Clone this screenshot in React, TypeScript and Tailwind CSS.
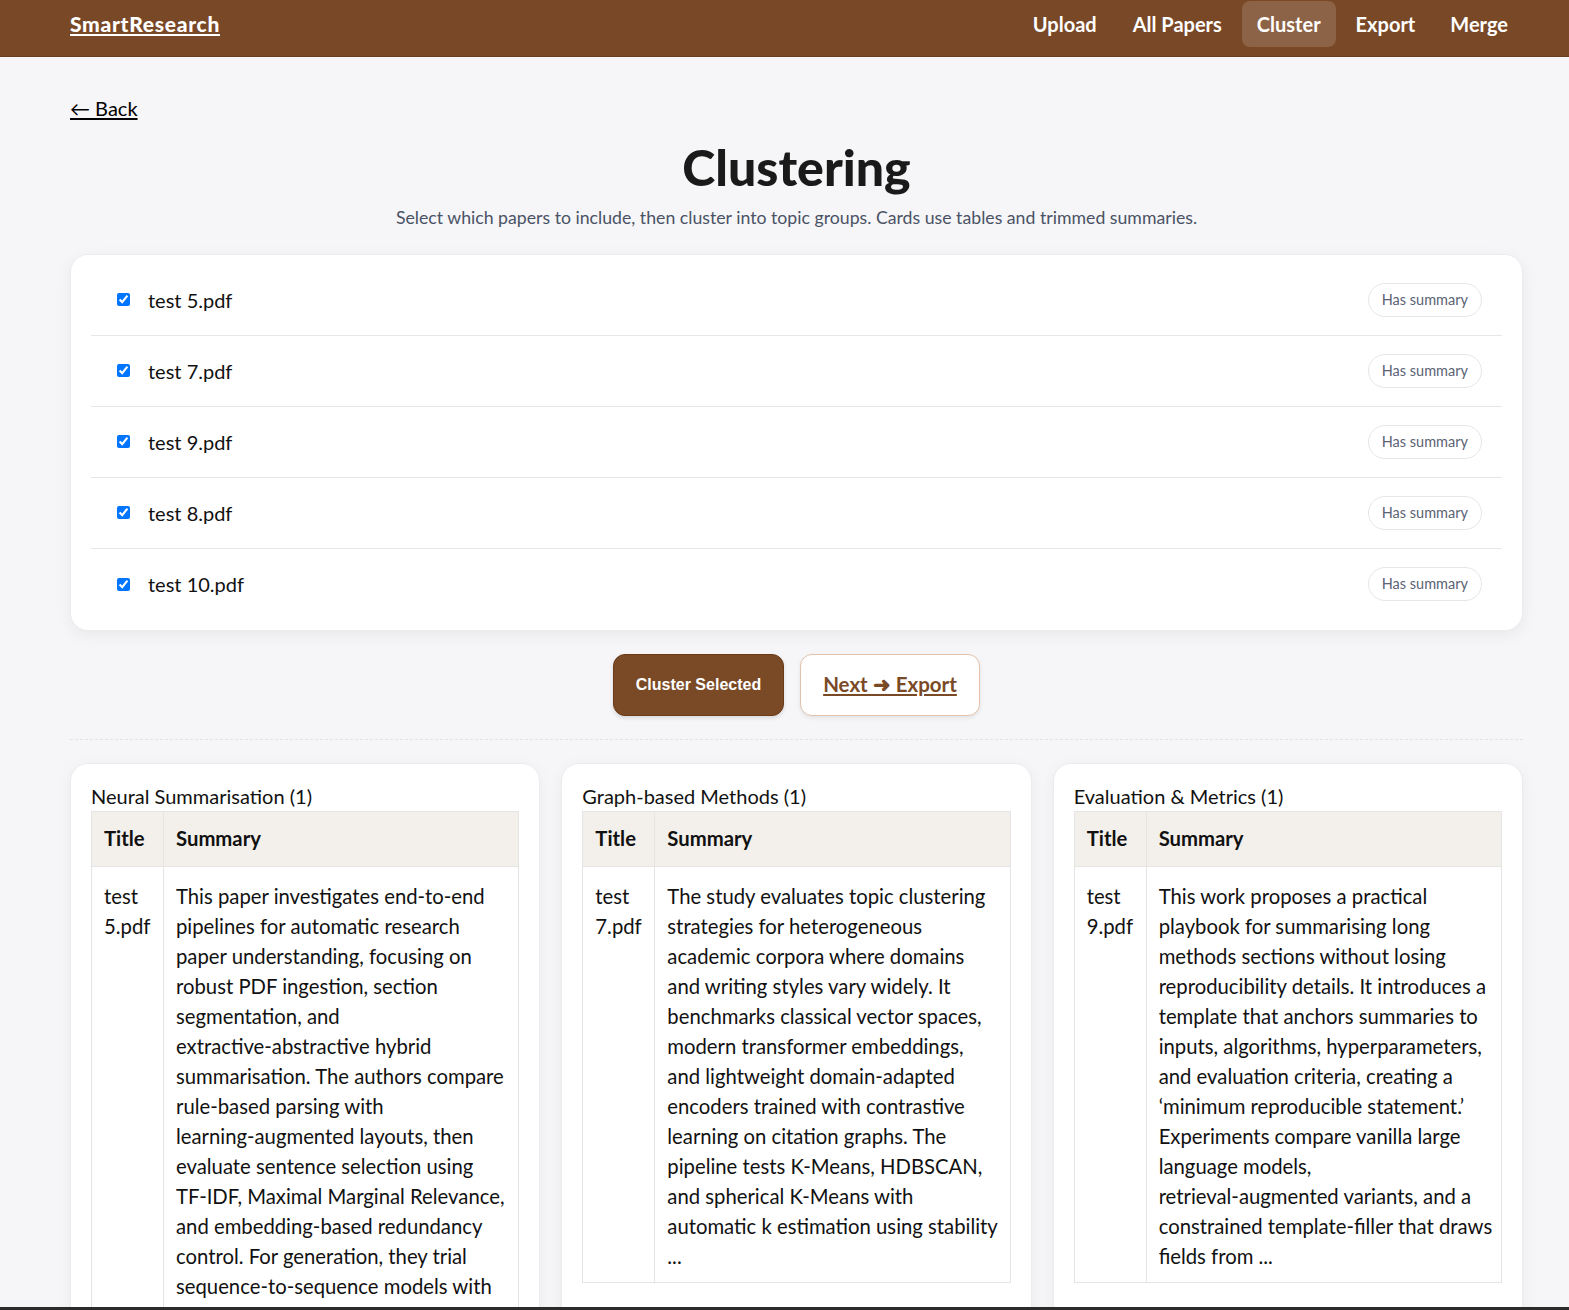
import React from 'react'

const font = 'Lato, "Noto Sans", Arial, sans-serif'

const papers = ['test 5.pdf', 'test 7.pdf', 'test 9.pdf', 'test 8.pdf', 'test 10.pdf']

const clusters = [
  {
    name: 'Neural Summarisation (1)',
    title: 'test 5.pdf',
    lines: [
      'This paper investigates end-to-end',
      'pipelines for automatic research',
      'paper understanding, focusing on',
      'robust PDF ingestion, section',
      'segmentation, and',
      'extractive-abstractive hybrid',
      'summarisation. The authors compare',
      'rule-based parsing with',
      'learning-augmented layouts, then',
      'evaluate sentence selection using',
      'TF-IDF, Maximal Marginal Relevance,',
      'and embedding-based redundancy',
      'control. For generation, they trial',
      'sequence-to-sequence models with',
      'citation-aware prompting and ...',
    ],
  },
  {
    name: 'Graph-based Methods (1)',
    title: 'test 7.pdf',
    lines: [
      'The study evaluates topic clustering',
      'strategies for heterogeneous',
      'academic corpora where domains',
      'and writing styles vary widely. It',
      'benchmarks classical vector spaces,',
      'modern transformer embeddings,',
      'and lightweight domain-adapted',
      'encoders trained with contrastive',
      'learning on citation graphs. The',
      'pipeline tests K-Means, HDBSCAN,',
      'and spherical K-Means with',
      'automatic k estimation using stability',
      '...',
    ],
  },
  {
    name: 'Evaluation & Metrics (1)',
    title: 'test 9.pdf',
    lines: [
      'This work proposes a practical',
      'playbook for summarising long',
      'methods sections without losing',
      'reproducibility details. It introduces a',
      'template that anchors summaries to',
      'inputs, algorithms, hyperparameters,',
      'and evaluation criteria, creating a',
      '\u2018minimum reproducible statement.\u2019',
      'Experiments compare vanilla large',
      'language models,',
      'retrieval-augmented variants, and a',
      'constrained template-filler that draws',
      'fields from ...',
    ],
  },
]

export default function App() {
  return (
    <div className="min-h-screen bg-[#f6f6f8] text-[#111]" style={{ fontFamily: font }}>
      {/* header */}
      <header className="h-[57px] bg-[#794827] border-b border-[#6a3d1f]">
        <div className="ml-[70px] w-[1453px] h-[48px] flex items-center justify-between">
          <a className="text-white text-[21px] font-black tracking-[0.7px] underline underline-offset-2 decoration-2">SmartResearch</a>
          <nav className="flex items-center gap-[4px] h-full text-white text-[20px] font-bold">
            <a className="px-[16px] py-[8px]">Upload</a>
            <a className="px-[16px] py-[8px]">All Papers</a>
            <a className="px-[15px] h-[46px] flex items-center rounded-lg bg-white/15">Cluster</a>
            <a className="px-[16px] py-[8px]">Export</a>
            <a className="px-[15px] py-[8px]">Merge</a>
          </nav>
        </div>
      </header>

      <main className="ml-[70px] w-[1453px] pb-10">
        <div className="pt-[36px]">
          <a className="text-[20px] underline underline-offset-2 text-black">← Back</a>
        </div>

        <h1 className="mt-[12px] text-center text-[50px] leading-[64px] font-black text-[#1a1a1a]">Clustering</h1>
        <p className="mt-[6px] text-center text-[17.7px] text-[#4a5265]">
          Select which papers to include, then cluster into topic groups. Cards use tables and trimmed summaries.
        </p>

        {/* paper selection */}
        <section className="mt-[22px] bg-white rounded-[18px] border border-[#ececef] shadow-[0_4px_16px_rgba(0,0,0,0.06)] px-[20px] py-[10px]">
          {papers.map((p, i) => (
            <div
              key={p}
              className={`h-[71px] flex items-center justify-between pl-[26px] pr-[20px] ${i < papers.length - 1 ? 'border-b border-[#e6e6e9]' : ''}`}
            >
              <label className="flex items-center gap-[18px] text-[20px]">
                <input type="checkbox" defaultChecked className="w-[13px] h-[13px] m-0 accent-[#0075ff]" />
                <span>{p}</span>
              </label>
              <span className="h-[34px] flex items-center px-[13px] rounded-full border border-[#e5e6ea] text-[14.5px] text-[#5b6375]">
                Has summary
              </span>
            </div>
          ))}
        </section>

        {/* actions */}
        <div className="mt-[23px] flex justify-center gap-[16px]">
          <button className="w-[171px] h-[62px] rounded-xl bg-[#7a4a26] border border-[#6b3a17] text-white text-[16px] font-bold shadow-[0_2px_4px_rgba(0,0,0,0.12)]" style={{ fontFamily: '"Liberation Sans", Arial, sans-serif' }}>
            Cluster Selected
          </button>
          <button className="w-[180px] h-[62px] rounded-xl bg-white border border-[#e2c2aa] text-[#7a4a26] text-[20.5px] font-bold underline underline-offset-2 decoration-2 shadow-[0_2px_4px_rgba(0,0,0,0.08)]">
            Next ➜ Export
          </button>
        </div>

        <div className="mt-[23px] border-t border-dashed border-[#e3e3e6]" />

        {/* clusters */}
        <div className="mt-[23px] grid grid-cols-3 gap-[21px]">
          {clusters.map(c => (
            <div key={c.name} className="bg-white rounded-[18px] border border-[#ececef] shadow-[0_4px_16px_rgba(0,0,0,0.05)] px-[20px] pt-[18px] pb-[20px]">
              <h3 className="text-[20px] leading-[29px]">{c.name}</h3>
              <table className="w-full table-fixed border-collapse border border-[#e5e5e5] text-[20.3px]">
                <thead>
                  <tr className="bg-[#f3f0eb]">
                    <th className="w-[72px] border border-[#e5e5e5] h-[55px] px-[12px] text-left font-bold">Title</th>
                    <th className="border border-[#e5e5e5] h-[55px] px-[12px] text-left font-bold">Summary</th>
                  </tr>
                </thead>
                <tbody>
                  <tr>
                    <td className="border border-[#e5e5e5] align-top px-[12px] pt-[14px] pb-[11px] leading-[30px]">{c.title}</td>
                    <td className="border border-[#e5e5e5] align-top px-[12px] pt-[14px] pb-[11px] leading-[30px]">
                      {c.lines.map((l, i) => (
                        <span key={i} className="block whitespace-nowrap">{l}</span>
                      ))}
                    </td>
                  </tr>
                </tbody>
              </table>
            </div>
          ))}
        </div>
      </main>
      <div className="fixed bottom-0 left-0 right-0 h-[3px] bg-[#2b2b2b]" />
    </div>
  )
}
